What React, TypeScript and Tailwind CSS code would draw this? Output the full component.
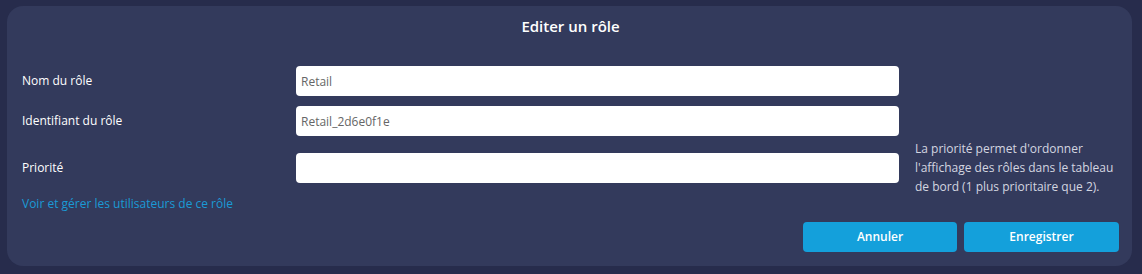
import React from "react";

export default function App() {
  return (
    <div
      className="w-[1142px] h-[274px] bg-[#272c4c] pl-[7px] pt-[6px] pr-[10px] pb-[8px]"
      style={{ fontFamily: '"Open Sans", "Liberation Sans", sans-serif' }}
    >
      <div className="h-full w-full rounded-[16px] bg-[#333a5c] pt-[8px] pl-[15px] pr-[13px] flex flex-col">
        <div className="text-center text-white text-[15px] leading-[24px] font-semibold">
          Editer un rôle
        </div>

        <div className="mt-[28px] flex items-center h-[30px]">
          <div className="w-[274px] shrink-0 text-white text-[12px]">Nom du rôle</div>
          <input
            readOnly
            value="Retail"
            className="w-[603px] shrink-0 h-[30px] rounded-[4px] bg-white px-[5px] text-[12px] text-[#666] outline-none"
            style={{ fontFamily: '"Open Sans", "Liberation Sans", sans-serif' }}
          />
        </div>

        <div className="mt-[10px] flex items-center h-[30px]">
          <div className="w-[274px] shrink-0 text-white text-[12px]">Identifiant du rôle</div>
          <input
            readOnly
            value="Retail_2d6e0f1e"
            className="w-[603px] shrink-0 h-[30px] rounded-[4px] bg-white px-[5px] text-[12px] text-[#666] outline-none"
            style={{ fontFamily: '"Open Sans", "Liberation Sans", sans-serif' }}
          />
        </div>

        <div className="mt-[3px] flex items-center">
          <div className="w-[274px] shrink-0 text-white text-[12px]">Priorité</div>
          <input
            readOnly
            value=""
            className="w-[603px] shrink-0 h-[30px] rounded-[4px] bg-white px-[5px] text-[12px] text-[#666] outline-none"
          />
          <div className="ml-[16px] w-[205px] shrink-0 text-[#d3d6e0] text-[12px] leading-[19px]">
            La priorité permet d'ordonner l'affichage des rôles dans le tableau de bord (1 plus
            prioritaire que 2).
          </div>
        </div>

        <div className="-mt-[1px] text-[#1a9ad6] text-[12px] leading-[18px]">
          Voir et gérer les utilisateurs de ce rôle
        </div>

        <div className="mt-[9px] flex justify-end gap-[7px]">
          <button className="w-[154px] h-[30px] rounded-[4px] bg-[#14a0db] text-white text-[12px] font-semibold">
            Annuler
          </button>
          <button className="w-[155px] h-[30px] rounded-[4px] bg-[#14a0db] text-white text-[12px] font-semibold">
            Enregistrer
          </button>
        </div>
      </div>
    </div>
  );
}
